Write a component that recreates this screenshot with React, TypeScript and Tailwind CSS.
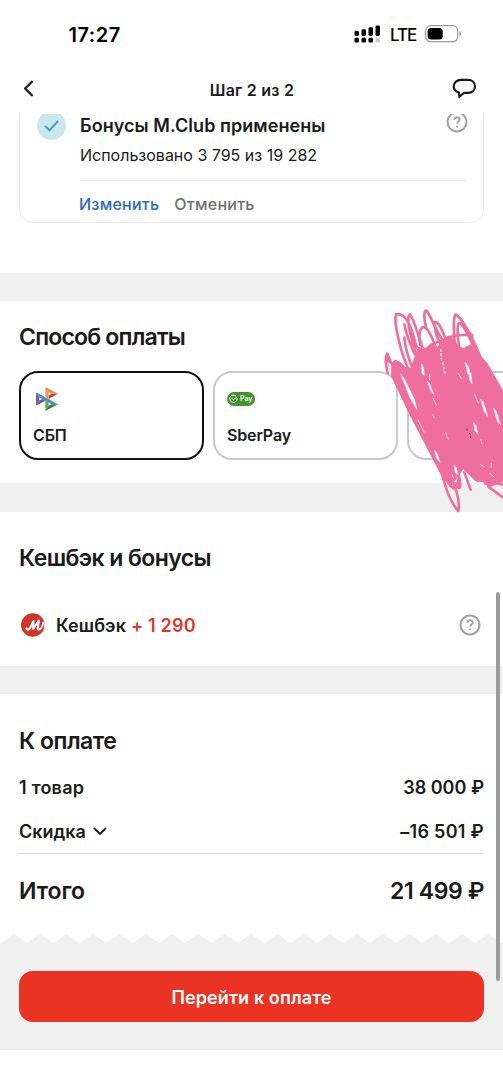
import type { ReactNode } from "react";
import { ChevronLeft } from "lucide-react";
import clsx from "clsx";

function HelpIcon() {
  return (
    <svg width="22" height="22" viewBox="0 0 22 22" fill="none" stroke="#a0a0a0" className="shrink-0">
      <circle cx="11" cy="11" r="9.5" strokeWidth="2" />
      <path d="M8.3 8.8c.1-1.6 1.2-2.5 2.7-2.5 1.6 0 2.7 1 2.7 2.3 0 2-2.6 1.9-2.6 4" strokeWidth="1.9" />
      <circle cx="11.1" cy="15.5" r="1.1" fill="#a0a0a0" stroke="none" />
    </svg>
  );
}

function StatusIcons() {
  return (
    <div className="flex items-center">
      <svg width="27" height="19" viewBox="0 0 27 19">
        <rect x="0.5" y="6" width="4.5" height="5" rx="1.4" />
        <rect x="7.5" y="4.3" width="4.5" height="6.7" rx="1.4" />
        <rect x="14.5" y="2.3" width="4.5" height="8.7" rx="1.4" />
        <rect x="21.5" y="0.5" width="4.5" height="10.5" rx="1.4" />
        <rect x="0.5" y="12.8" width="4.5" height="4.8" rx="1.4" />
        <rect x="7.5" y="12.8" width="4.5" height="4.8" rx="1.4" />
        <rect x="14.5" y="12.8" width="4.5" height="4.8" rx="1.4" />
        <rect x="21.5" y="12.8" width="4.5" height="4.8" rx="1.4" fill="#ccc" />
      </svg>
      <span className="mt-px ml-[9px] w-[26px] text-[17px] leading-6 font-medium tracking-[-1.1px]">LTE</span>
      <svg width="37" height="18" viewBox="0 0 37 18" className="ml-[9px]">
        <rect x="0.7" y="0.7" width="32" height="16" rx="5" fill="none" stroke="#999" strokeWidth="1.2" />
        <rect x="2.7" y="2.9" width="15" height="11.5" rx="3.5" />
        <path d="M34.5 6c2 .8 2 4.6 0 5.4z" fill="#999" />
      </svg>
    </div>
  );
}

function SbpLogo() {
  return (
    <svg width="22" height="24" viewBox="0 0 97.3 120" preserveAspectRatio="none" className="ml-[3px]">
      <path fill="#6A5FA8" d="M0 26.1l14.5 26v15.8L0 93.9z" />
      <path fill="#D9363A" d="M55.8 42.6l13.6-8.3h27.9L55.8 59.7z" />
      <path fill="#E3A23C" d="M55.7 26l.1 34.3-14.6-8.9V0z" />
      <path fill="#E58A3C" d="M97.3 34.3H69.4L55.7 26 41.2 0z" />
      <path fill="#63B22F" d="M55.8 94V77.3l-14.6-8.8V120z" />
      <path fill="#84509A" d="M0 93.9l41.4-25.4L27.5 60l-13 7.9z" />
      <path fill="#4191CE" d="M69.4 85.7L14.5 52.1 0 26.1l97.2 59.6z" />
      <path fill="#2C7F3C" d="M41.2 120l14.6-26 13.6-8.3h27.8z" />
    </svg>
  );
}

function SberPayLogo() {
  return (
    <div className="flex h-[14px] w-7 items-center rounded-full bg-[#42942f] pl-[2px] text-white">
      <svg width="9" height="10" viewBox="0 0 10 10" fill="none" stroke="currentColor" strokeWidth="1.1">
        <path d="M7.8 1.8A4.1 4.1 0 1 0 9 4.1" />
        <path d="M3 4.3l1.8 1.4 4-2.8" />
      </svg>
      <span className="ml-[2px] text-[7px] leading-[14px] font-semibold">Pay</span>
    </div>
  );
}

function ClubLogo() {
  return (
    <svg width="24" height="24" viewBox="0 0 24 24" className="ml-[2px]">
      <defs>
        <clipPath id="club">
          <circle cx="11.8" cy="12" r="11.8" />
        </clipPath>
      </defs>
      <g clipPath="url(#club)" fill="none" stroke="#fff" strokeLinecap="round" strokeLinejoin="round">
        <rect width="24" height="24" fill="#cf3529" stroke="none" />
        <path d="M5.500 15.500c.8 1.800 2.600 1.300 3.600-.6L12.500 8l-.3 7.800L17.800 7.500l-1 7.500c-.1 1.700 1.200 2 2.500.8" strokeWidth="2.100" />
        <path d="M19.500 15.800c1.300-.8 2-3 2.600-6.300M23.500 9v6" strokeWidth="1.500" />
      </g>
    </svg>
  );
}

function Scribble() {
  return (
    <svg
      className="pointer-events-none absolute top-[-6px] right-0"
      width="140"
      height="225"
      viewBox="0 0 420 675"
      fill="none"
      stroke="#ee6f9d"
      strokeWidth="8"
      strokeLinecap="round"
      strokeLinejoin="round"
    >
      <path
        fill="#ee6f9d"
        strokeWidth="4"
        d="M72 190L84 238 132 340 236 540 262 575 275 555 300 520 338 556 362 560 378 574 420 560V290L372 206 345 175 322 150 300 162 282 150 262 124 240 134 225 158 205 146 190 160 166 158 150 205 144 222 124 216 110 202 96 196 88 205z"
      />
      <path d="M136 222C110 165 92 80 99 58c28-7 45 30 62 100M160 180C142 120 128 70 140 58c12 10 22 55 42 110M124 88c6 30 22 70 32 90M124 128c3 35 12 60 22 85" />
      <path d="M172 150c-8-45 4-58 14-52 14 8 22 30 30 55M190 100C180 60 184 42 192 48c10 15 28 60 48 90M212 82c14-5 22 15 34 45M206 150c35-22 75-34 122-30M216 92c0 25 10 45 20 60" />
      <path d="M276 150C270 90 272 50 282 60c22 22 52 80 76 140M288 150C280 105 284 80 292 84c20 20 35 60 48 90M304 100c10 2 18 15 24 28" />
      <path d="M74 234C68 210 66 190 72 176c8 10 14 35 22 60M238 540c12 50 26 84 48 108 6-30-8-70-22-100M262 570c14 20 24 10 24-20M286 535c14 55 0 50-8 30M304 532l19 52M330 540l14 18M366 565c18-4 34 0 54 4M376 575l44 32" />
      <g fill="#fff" stroke="#fff" strokeWidth="1.500">
        <path d="M77 203l6 5 1 30-5-8zM114 238l10 14 30 60 8 32-22-38zM176 208l6 10 2 24-7-8zM194 260l6 6 12 32-8-10zM307 202l10 14 5 24-7-4zM318 234l6 0 3 32-7-12zM353 312l8 10 13 42-10-14zM392 340l8 10 13 40-9-10zM332 384l7 8 6 26-8-10zM215 466l7 8 9 28-9-10zM274 512l6 6 5 22-8-8z" />
      </g>
      <g stroke="#fff" strokeWidth="4">
        <path strokeDasharray="5 8" d="M233 164l3 36M240 204l6 36" />
        <path d="M200 238v16M285 234l10 16M334 298l12 26M210 310l10 20M165 375l18 36M208 358l6 10M248 414l8 18M352 508l10 7M385 505l-1 12M380 535l12 10M354 434l2 12M268 540l3 8" strokeWidth="2" />
      </g>
      <path d="M312 402v4M320 415l2 3M323 425v3" stroke="#713047" strokeWidth="3" />
    </svg>
  );
}

function PayCard({ active, logo, name }: { active?: boolean; logo?: ReactNode; name?: string }) {
  return (
    <div
      className={clsx(
        "flex h-[89px] w-[184.5px] shrink-0 flex-col rounded-[19px] border-2 bg-white pt-3.5 pl-3",
        active ? "border-[#111]" : "border-[#c9c9c9]"
      )}
    >
      <div className="flex h-6 items-center">{logo}</div>
      <span className="mt-3 text-[16px] leading-6 font-semibold tracking-[-0.15px]">{name}</span>
    </div>
  );
}

// torn receipt edge
const teeth = Array.from({ length: 20 }, (_, i) => `L${i * 26.35 + 0.8} 9L${i * 26.35 + 14} 0`).join("");

export default function App() {
  return (
    <div className="relative h-[1090px] w-[503px] overflow-hidden bg-white font-['Inter',sans-serif] text-[#1a1a1a]">
      <div className="flex h-[68px] items-center justify-between pr-[41px] pl-[68.5px] text-black">
        <span className="mt-px text-[20px] leading-6 font-semibold tracking-[0.5px]">17:27</span>
        <StatusIcons />
      </div>

      <header className="flex h-[46px] items-start justify-between pr-[26px] pl-[15px]">
        <ChevronLeft size={27} strokeWidth={2.1} className="mt-[7px]" />
        <h1 className="mt-2.5 ml-[10px] text-[16px] leading-6 font-semibold tracking-[0.25px]">Шаг 2 из 2</h1>
        <svg width="25" height="21" viewBox="0 0 25 21" fill="none" stroke="#1a1a1a" strokeWidth="2.2" strokeLinejoin="round" className="mt-[10px]">
          <path d="M9 1.800h7c4.300 0 7 2.900 7 6.500s-2.700 6.500-7 6.500h-4L7.300 19l-.3-4.500C3.500 13.700 1.700 11.200 1.700 8.300 1.700 4.700 4.700 1.800 9 1.800z" />
        </svg>
      </header>

      <section className="h-[159px] overflow-hidden px-[19px]">
        <div className="-mt-4 flex h-[125px] rounded-[14px] border border-[#ececec] pt-3 pr-4 pl-[17px]">
          <div className="flex size-[29px] shrink-0 items-center justify-center rounded-full bg-[#c9e8ed]">
            <svg width="15" height="12" viewBox="0 0 15 12" fill="none" stroke="#42a0af" strokeWidth="2" strokeLinecap="round">
              <path d="M1.5 6.5l4 3.8 8-8.8" />
            </svg>
          </div>
          <div className="ml-[14px] flex-1">
            <div className="-mr-px flex justify-between">
              <h2 className="mt-[3px] text-[18px] leading-6 font-semibold tracking-[0.05px]">Бонусы M.Club применены</h2>
              <HelpIcon />
            </div>
            <p className="mt-[5px] text-[16px] leading-6">Использовано 3 795 из 19 282</p>
            <div className="mt-[13px] border-t border-[#ececec]" />
            <div className="mt-[11px] -ml-px flex gap-[15px] text-[16px] leading-6 font-medium tracking-[0.25px]">
              <span className="text-[#2b66c4]">Изменить</span>
              <span className="text-[#707070]">Отменить</span>
            </div>
          </div>
        </div>
      </section>

      <div className="h-7 bg-[#f0f0f0]" />

      <section className="relative h-[182px] pt-5 pl-[19px]">
        <h2 className="text-[23px] leading-8 font-semibold tracking-[-0.8px]">Способ оплаты</h2>
        <div className="mt-[18px] flex gap-[9.5px] overflow-hidden">
          <PayCard active logo={<SbpLogo />} name="СБП" />
          <PayCard logo={<SberPayLogo />} name="SberPay" />
          <PayCard />
        </div>
        <Scribble />
      </section>

      <div className="h-[29px] bg-[#f0f0f0]" />

      <section className="h-[154px] pt-[30px] pr-[22px] pl-[19px]">
        <h2 className="text-[23px] leading-8 font-semibold tracking-[-0.6px]">Кешбэк и бонусы</h2>
        <div className="mt-[37px] flex items-center">
          <ClubLogo />
          <span className="mt-[3px] ml-[11px] text-[18px] leading-6 font-semibold tracking-[0.1px]">Кешбэк</span>
          <span className="mt-[3px] ml-[5px] flex-1 text-[18px] leading-6 font-semibold tracking-[0.2px] text-[#d9392e]">+ 1 290</span>
          <HelpIcon />
        </div>
      </section>

      <div className="h-7 bg-[#f0f0f0]" />

      <section className="h-60 px-[19px] pt-[31px]">
        <h2 className="text-[23px] leading-8 font-semibold tracking-[-0.5px]">К оплате</h2>
        <div className="mt-[19px] flex justify-between text-[18px] leading-6 font-semibold">
          <span className="tracking-[0.25px]">1 товар</span>
          <span>38 000 ₽</span>
        </div>
        <div className="mt-5 flex justify-between border-b border-[#dcdcdc] pb-[9px] text-[18px] leading-6 font-semibold">
          <span className="flex items-center gap-[7px]">
            Скидка
            <svg width="14" height="9" viewBox="0 0 14 9" fill="none" stroke="currentColor" strokeWidth="1.8" strokeLinecap="round" className="mb-[2px]">
              <path d="M1.5 1.5L7 7l5.500-5.500" />
            </svg>
          </span>
          <span className="tracking-[0.3px]">–16 501 ₽</span>
        </div>
        <div className="mt-[21px] flex justify-between text-[23px] leading-8 font-semibold tracking-[-0.4px]">
          <span className="tracking-[-0.1px]">Итого</span>
          <span>21 499 ₽</span>
        </div>
      </section>

      <footer>
        <svg width="503" height="10" viewBox="0 0 503 10" className="block">
          <path d={`M0 10V8.5${teeth}V10z`} fill="#f0f0f0" />
        </svg>
        <div className="h-[106px] bg-[#f0f0f0] px-[19px] pt-[27px]">
          <button className="h-[51px] w-full rounded-[14px] bg-[#eb3323] pt-[3px] text-[18px] leading-6 font-semibold tracking-[0.1px] text-white">
            Перейти к оплате
          </button>
        </div>
      </footer>

      <div className="absolute top-[592px] right-[3px] h-[389px] w-1 rounded-full bg-[#9b9b9b]" />
    </div>
  );
}
